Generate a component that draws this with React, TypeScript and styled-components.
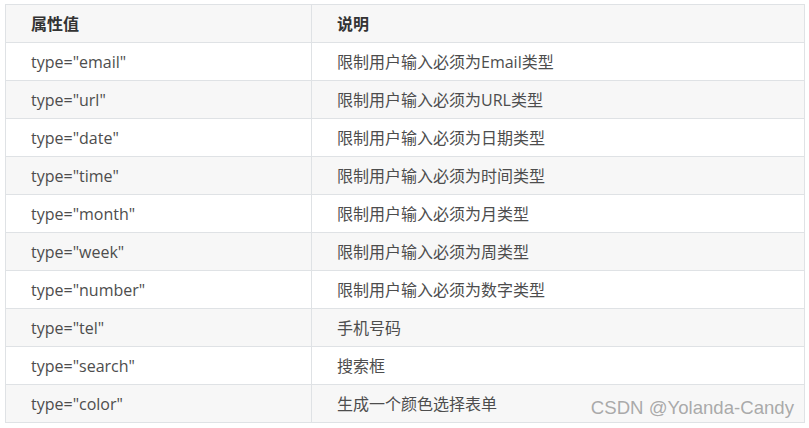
import React from "react";
import styled, { createGlobalStyle } from "styled-components";

const Global = createGlobalStyle`
  html, body { margin: 0; padding: 0; background: #ffffff; }
  body { font-family: "Open Sans", "Noto Sans CJK SC", sans-serif; }
`;

const Page = styled.div`
  width: 809px;
  height: 428px;
  padding: 4px 0 0 5px;
  box-sizing: border-box;
  position: relative;
`;

const Table = styled.table`
  width: 800px;
  border-collapse: collapse;
  table-layout: fixed;
  font-size: 16px;
  color: #4d4d4d;
`;

const Row = styled.tr<{ $shade: boolean }>`
  height: 38px;
  background: ${(p) => (p.$shade ? "#f7f7f7" : "#ffffff")};
`;

const Head = styled.th`
  border: 1px solid #dfe2e5;
  text-align: left;
  font-weight: 700;
  color: #333333;
  padding: 0 25px;
  line-height: 20px;
  font-family: "Open Sans", "Noto Sans CJK SC", sans-serif;
`;

const Cell = styled.td`
  border: 1px solid #dfe2e5;
  padding: 0 25px;
  line-height: 20px;
  font-family: "Open Sans", "Noto Sans CJK SC", sans-serif;
  white-space: nowrap;
`;

const Watermark = styled.div`
  position: absolute;
  right: 15px;
  bottom: 9px;
  font-family: "Liberation Sans", Arial, sans-serif;
  font-size: 18.6px;
  color: rgba(160, 160, 160, 0.9);
`;

const rows: [string, string][] = [
  ['type="email"', "限制用户输入必须为Email类型"],
  ['type="url"', "限制用户输入必须为URL类型"],
  ['type="date"', "限制用户输入必须为日期类型"],
  ['type="time"', "限制用户输入必须为时间类型"],
  ['type="month"', "限制用户输入必须为月类型"],
  ['type="week"', "限制用户输入必须为周类型"],
  ['type="number"', "限制用户输入必须为数字类型"],
  ['type="tel"', "手机号码"],
  ['type="search"', "搜索框"],
  ['type="color"', "生成一个颜色选择表单"],
];

export default function App() {
  return (
    <Page>
      <Global />
      <Table>
        <colgroup>
          <col style={{ width: "306px" }} />
          <col />
        </colgroup>
        <thead>
          <Row $shade>
            <Head>属性值</Head>
            <Head>说明</Head>
          </Row>
        </thead>
        <tbody>
          {rows.map(([a, b], i) => (
            <Row key={a} $shade={i % 2 === 1}>
              <Cell>{a}</Cell>
              <Cell>{b}</Cell>
            </Row>
          ))}
        </tbody>
      </Table>
      <Watermark>CSDN @Yolanda-Candy</Watermark>
    </Page>
  );
}
